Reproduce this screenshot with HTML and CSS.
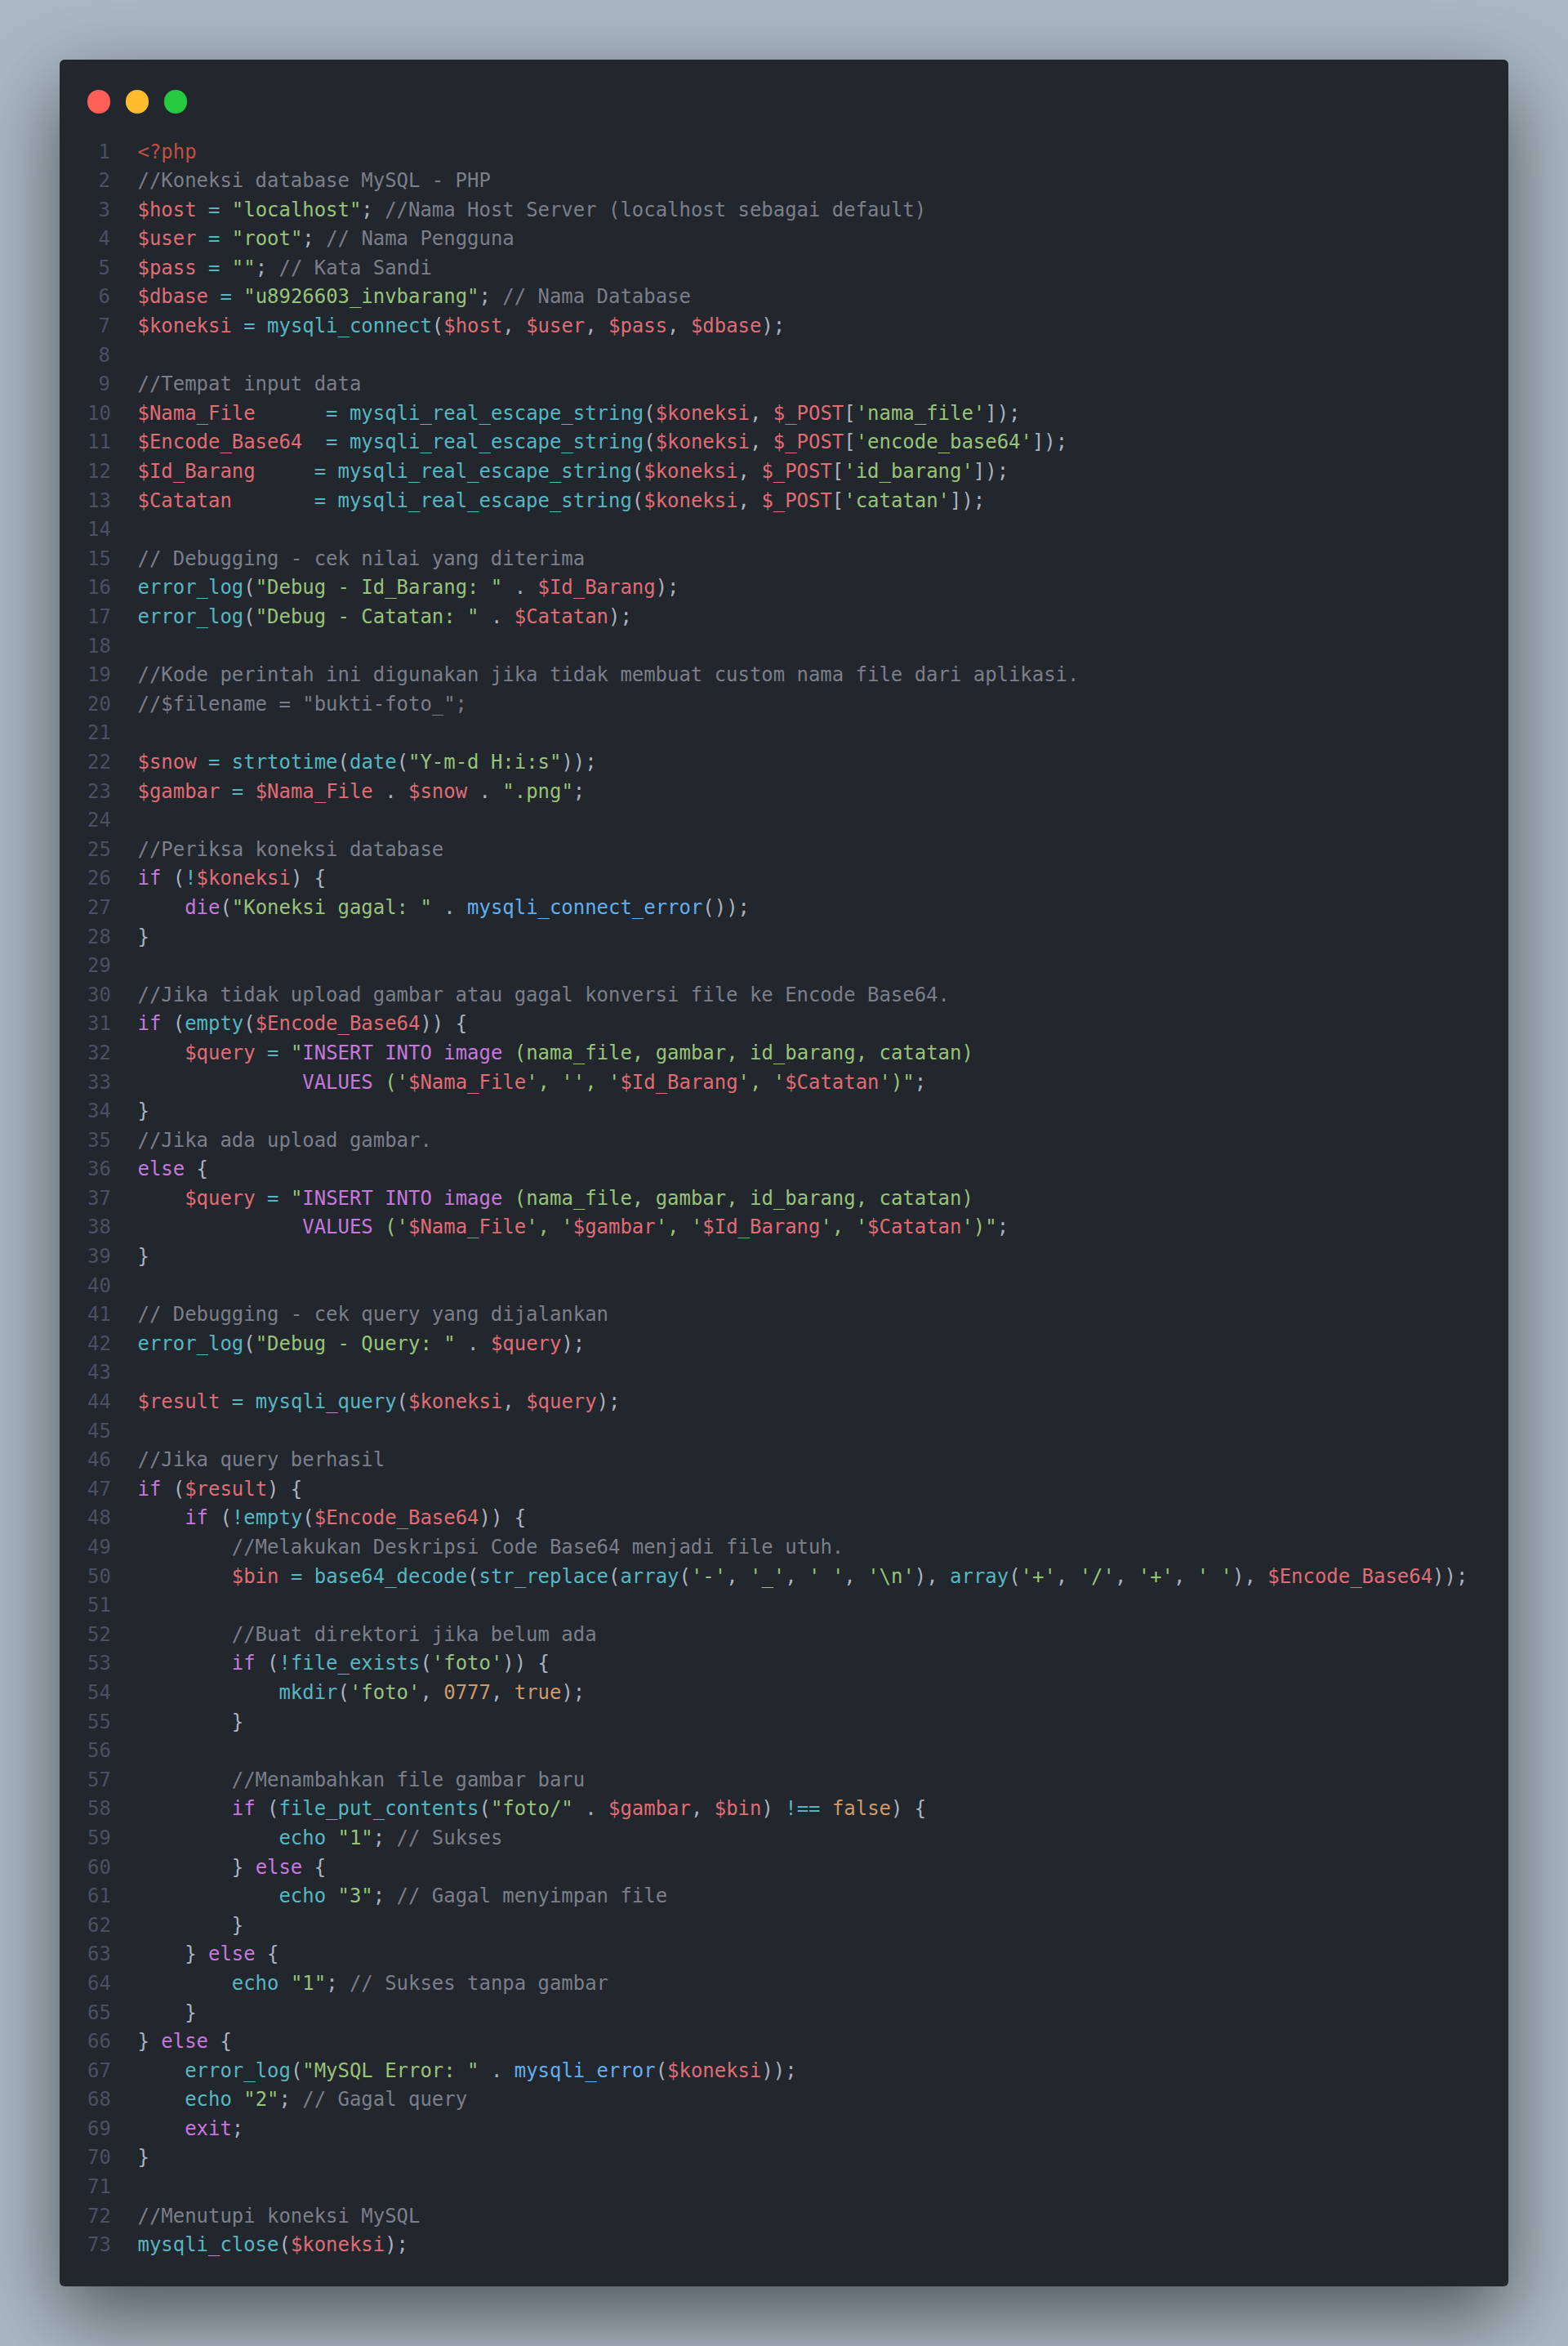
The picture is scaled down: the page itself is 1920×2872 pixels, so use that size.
FILE: index.html
```html
<!DOCTYPE html>
<html lang="en">
<head>
<meta charset="utf-8">
<title>Code</title>
<link rel="stylesheet" href="styles.css">
</head>
<body>
<main class="window">
<div class="dots"><span class="dot red"></span><span class="dot yellow"></span><span class="dot green"></span></div>
<div class="editor">
<pre class="nums">1
2
3
4
5
6
7
8
9
10
11
12
13
14
15
16
17
18
19
20
21
22
23
24
25
26
27
28
29
30
31
32
33
34
35
36
37
38
39
40
41
42
43
44
45
46
47
48
49
50
51
52
53
54
55
56
57
58
59
60
61
62
63
64
65
66
67
68
69
70
71
72
73</pre>
<pre class="code"><span class="tag">&lt;?php</span>
<span class="c">//Koneksi database MySQL - PHP</span>
<span class="v">$host</span> <span class="o">=</span> <span class="s">"localhost"</span>; <span class="c">//Nama Host Server (localhost sebagai default)</span>
<span class="v">$user</span> <span class="o">=</span> <span class="s">"root"</span>; <span class="c">// Nama Pengguna</span>
<span class="v">$pass</span> <span class="o">=</span> <span class="s">""</span>; <span class="c">// Kata Sandi</span>
<span class="v">$dbase</span> <span class="o">=</span> <span class="s">"u8926603_invbarang"</span>; <span class="c">// Nama Database</span>
<span class="v">$koneksi</span> <span class="o">=</span> <span class="f">mysqli_connect</span>(<span class="v">$host</span>, <span class="v">$user</span>, <span class="v">$pass</span>, <span class="v">$dbase</span>);

<span class="c">//Tempat input data</span>
<span class="v">$Nama_File</span>      <span class="o">=</span> <span class="f">mysqli_real_escape_string</span>(<span class="v">$koneksi</span>, <span class="v">$_POST</span>[<span class="s">'nama_file'</span>]);
<span class="v">$Encode_Base64</span>  <span class="o">=</span> <span class="f">mysqli_real_escape_string</span>(<span class="v">$koneksi</span>, <span class="v">$_POST</span>[<span class="s">'encode_base64'</span>]);
<span class="v">$Id_Barang</span>     <span class="o">=</span> <span class="f">mysqli_real_escape_string</span>(<span class="v">$koneksi</span>, <span class="v">$_POST</span>[<span class="s">'id_barang'</span>]);
<span class="v">$Catatan</span>       <span class="o">=</span> <span class="f">mysqli_real_escape_string</span>(<span class="v">$koneksi</span>, <span class="v">$_POST</span>[<span class="s">'catatan'</span>]);

<span class="c">// Debugging - cek nilai yang diterima</span>
<span class="f">error_log</span>(<span class="s">"Debug - Id_Barang: "</span> . <span class="v">$Id_Barang</span>);
<span class="f">error_log</span>(<span class="s">"Debug - Catatan: "</span> . <span class="v">$Catatan</span>);

<span class="c">//Kode perintah ini digunakan jika tidak membuat custom nama file dari aplikasi.</span>
<span class="c">//$filename = "bukti-foto_";</span>

<span class="v">$snow</span> <span class="o">=</span> <span class="f">strtotime</span>(<span class="f">date</span>(<span class="s">"Y-m-d H:i:s"</span>));
<span class="v">$gambar</span> <span class="o">=</span> <span class="v">$Nama_File</span> . <span class="v">$snow</span> . <span class="s">".png"</span>;

<span class="c">//Periksa koneksi database</span>
<span class="k">if</span> (<span class="o">!</span><span class="v">$koneksi</span>) {
    <span class="k">die</span>(<span class="s">"Koneksi gagal: "</span> . <span class="b">mysqli_connect_error</span>());
}

<span class="c">//Jika tidak upload gambar atau gagal konversi file ke Encode Base64.</span>
<span class="k">if</span> (<span class="f">empty</span>(<span class="v">$Encode_Base64</span>)) {
    <span class="v">$query</span> <span class="o">=</span> <span class="s">"</span><span class="k">INSERT INTO image</span> <span class="s">(nama_file, gambar, id_barang, catatan)</span>
              <span class="k">VALUES</span> <span class="s">('</span><span class="v">$Nama_File</span><span class="s">', '', '</span><span class="v">$Id_Barang</span><span class="s">', '</span><span class="v">$Catatan</span><span class="s">')"</span>;
}
<span class="c">//Jika ada upload gambar.</span>
<span class="k">else</span> {
    <span class="v">$query</span> <span class="o">=</span> <span class="s">"</span><span class="k">INSERT INTO image</span> <span class="s">(nama_file, gambar, id_barang, catatan)</span>
              <span class="k">VALUES</span> <span class="s">('</span><span class="v">$Nama_File</span><span class="s">', '</span><span class="v">$gambar</span><span class="s">', '</span><span class="v">$Id_Barang</span><span class="s">', '</span><span class="v">$Catatan</span><span class="s">')"</span>;
}

<span class="c">// Debugging - cek query yang dijalankan</span>
<span class="f">error_log</span>(<span class="s">"Debug - Query: "</span> . <span class="v">$query</span>);

<span class="v">$result</span> <span class="o">=</span> <span class="f">mysqli_query</span>(<span class="v">$koneksi</span>, <span class="v">$query</span>);

<span class="c">//Jika query berhasil</span>
<span class="k">if</span> (<span class="v">$result</span>) {
    <span class="k">if</span> (<span class="o">!</span><span class="f">empty</span>(<span class="v">$Encode_Base64</span>)) {
        <span class="c">//Melakukan Deskripsi Code Base64 menjadi file utuh.</span>
        <span class="v">$bin</span> <span class="o">=</span> <span class="f">base64_decode</span>(<span class="f">str_replace</span>(<span class="f">array</span>(<span class="s">'-'</span>, <span class="s">'_'</span>, <span class="s">' '</span>, <span class="s">'\n'</span>), <span class="f">array</span>(<span class="s">'+'</span>, <span class="s">'/'</span>, <span class="s">'+'</span>, <span class="s">' '</span>), <span class="v">$Encode_Base64</span>));

        <span class="c">//Buat direktori jika belum ada</span>
        <span class="k">if</span> (<span class="o">!</span><span class="f">file_exists</span>(<span class="s">'foto'</span>)) {
            <span class="f">mkdir</span>(<span class="s">'foto'</span>, <span class="n">0777</span>, <span class="n">true</span>);
        }

        <span class="c">//Menambahkan file gambar baru</span>
        <span class="k">if</span> (<span class="f">file_put_contents</span>(<span class="s">"foto/"</span> . <span class="v">$gambar</span>, <span class="v">$bin</span>) <span class="o">!==</span> <span class="n">false</span>) {
            <span class="f">echo</span> <span class="s">"1"</span>; <span class="c">// Sukses</span>
        } <span class="k">else</span> {
            <span class="f">echo</span> <span class="s">"3"</span>; <span class="c">// Gagal menyimpan file</span>
        }
    } <span class="k">else</span> {
        <span class="f">echo</span> <span class="s">"1"</span>; <span class="c">// Sukses tanpa gambar</span>
    }
} <span class="k">else</span> {
    <span class="f">error_log</span>(<span class="s">"MySQL Error: "</span> . <span class="b">mysqli_error</span>(<span class="v">$koneksi</span>));
    <span class="f">echo</span> <span class="s">"2"</span>; <span class="c">// Gagal query</span>
    <span class="k">exit</span>;
}

<span class="c">//Menutupi koneksi MySQL</span>
<span class="f">mysqli_close</span>(<span class="v">$koneksi</span>);</pre>
</div>
</main>
</body>
</html>
```
FILE: styles.css
```css
html, body { margin: 0; padding: 0; }
body {
  width: 1920px;
  height: 2872px;
  box-sizing: border-box;
  padding: 73px;
  background: #abb8c3;
  overflow: hidden;
}
.window {
  height: 2726px;
  box-sizing: border-box;
  padding: 37px 34px 0 34px;
  background: #22262d;
  border-radius: 6px;
  box-shadow: 0 35px 100px rgba(0, 0, 0, 0.55);
}
.dots { display: flex; gap: 18.5px; height: 28px; margin-left: -0.5px; }
.dot { width: 28.5px; height: 28.5px; border-radius: 50%; }
.red { background: #ff5f56; }
.yellow { background: #ffbd2e; }
.green { background: #27c93f; }
.editor {
  display: flex;
  margin-top: 30.5px;
  font-family: "DejaVu Sans Mono", monospace;
  font-size: 23.95px;
  line-height: 35.6px;
  color: #abb2bf;
}
pre { margin: 0; font: inherit; }
.nums {
  width: 28px;
  text-align: right;
  color: #495162;
  margin-right: 33.5px;
}
.tag { color: #be5046; }
.c { color: #7a7f89; }
.v { color: #e06c75; }
.o { color: #56b6c2; }
.s { color: #98c379; }
.f { color: #56b6c2; }
.b { color: #61afef; }
.k { color: #c678dd; }
.n { color: #d19a66; }
```
